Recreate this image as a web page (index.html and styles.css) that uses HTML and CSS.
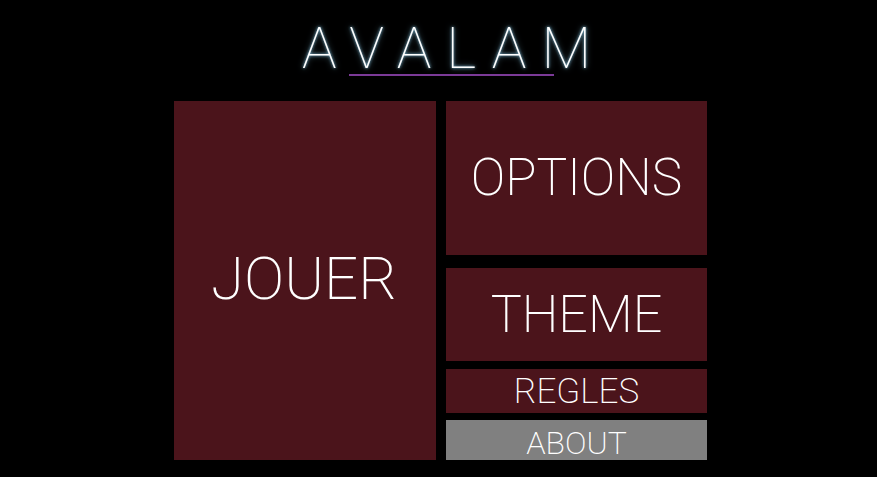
FILE: index.html
```html
<!DOCTYPE html>
<html>
<head>
<meta charset="utf-8">
<link rel="stylesheet" href="styles.css">
</head>
<body>
<div class="page">
  <header class="head">
    <h1 class="title">AVALAM</h1>
    <div class="underline"></div>
  </header>
  <main class="menu">
    <div class="tile jouer">JOUER</div>
    <div class="side">
      <div class="tile options">OPTIONS</div>
      <div class="tile theme">THEME</div>
      <div class="tile regles">REGLES</div>
      <div class="tile about">ABOUT</div>
    </div>
  </main>
</div>
</body>
</html>
```
FILE: styles.css
```css
html, body {
  margin: 0;
  padding: 0;
  background: #000;
  width: 877px;
  height: 477px;
  overflow: hidden;
  font-family: Roboto, "Liberation Sans", sans-serif;
}
.page {
  padding-left: 174px;
  width: 533px;
}
.head {
  height: 101px;
  display: flex;
  flex-direction: column;
  align-items: flex-start;
}
.title {
  margin: 16px 0 0 128px;
  font-weight: 100;
  font-size: 58px;
  line-height: 64px;
  letter-spacing: 15px;
  color: #fff;
  text-shadow: 0 0 3px #8fd0ee, 0 0 6px rgba(140, 200, 230, 0.6);
}
.underline {
  margin: -6px 0 0 175px;
  width: 205px;
  height: 2px;
  background: #7b3a97;
}
.menu {
  display: flex;
  gap: 10px;
  height: 359px;
}
.tile {
  background: #4b141b;
  color: #fff;
  font-weight: 200;
  display: flex;
  align-items: center;
  justify-content: center;
  box-sizing: border-box;
}
.jouer {
  width: 262px;
  font-size: 60px;
  padding: 0 2px 4px 0;
}
.side {
  width: 261px;
  display: flex;
  flex-direction: column;
}
.options {
  height: 154px;
  font-size: 51.5px;
  padding-bottom: 2px;
}
.theme {
  margin-top: 13px;
  height: 93px;
  font-size: 52px;
}
.regles {
  margin-top: 8px;
  height: 44px;
  font-size: 35px;
}
.about {
  margin-top: 7px;
  height: 40px;
  font-size: 32px;
  padding-top: 5px;
  background: #808080;
}
```
